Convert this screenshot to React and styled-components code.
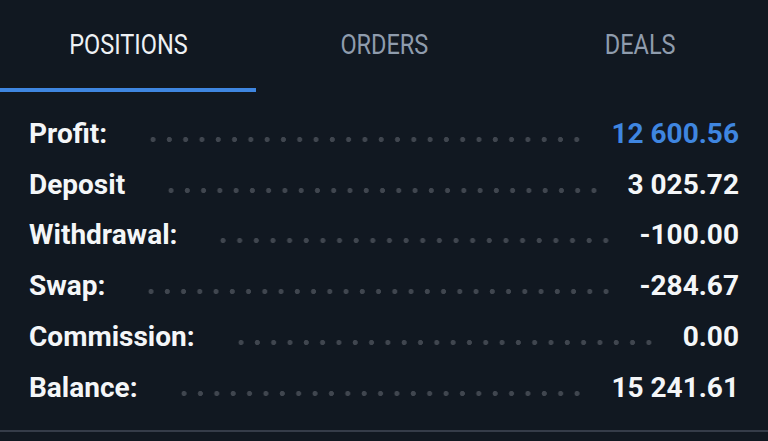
import React from 'react'
import styled, { createGlobalStyle } from 'styled-components'

const BG = '#111821'
const BLUE = '#3f86e0'

const Global = createGlobalStyle`
  html, body {
    margin: 0;
    padding: 0;
    background: ${BG};
  }
  body {
    font-family: Roboto, "Noto Sans", sans-serif;
  }
`

const Screen = styled.div`
  width: 768px;
  height: 441px;
  background: ${BG};
  display: flex;
  flex-direction: column;
  overflow: hidden;
`

const Tabs = styled.div`
  display: grid;
  grid-template-columns: repeat(3, 1fr);
  height: 92px;
  flex-shrink: 0;
`

const Tab = styled.div`
  display: flex;
  justify-content: center;
  padding-top: 29px;
  box-sizing: border-box;
  border-bottom: 4px solid ${props => (props.active ? BLUE : 'transparent')};
`

const TabLabel = styled.span`
  display: inline-block;
  font-size: 28px;
  line-height: 32px;
  font-weight: 400;
  color: ${props => (props.active ? '#eef1f4' : '#8f9cad')};
  transform: scaleX(0.84);
`

const List = styled.div`
  flex: 1;
  padding: 16px 29px 0 29px;
  display: flex;
  flex-direction: column;
`

const Row = styled.div`
  display: flex;
  align-items: center;
  height: 50.8px;
`

const Label = styled.span`
  font-size: 28px;
  font-weight: 700;
  color: #f4f6f8;
  white-space: nowrap;
`

const Leader = styled.span`
  flex: 1;
  align-self: stretch;
  margin: 0 26px 0 38px;
  background-image: radial-gradient(circle, #40464f 2.2px, transparent 2.9px);
  background-size: 16px 7px;
  background-position: 0 calc(50% + 6px);
  background-repeat: space no-repeat;
`

const Value = styled.span`
  font-size: 28px;
  font-weight: 700;
  color: ${props => props.color || '#f4f6f8'};
  white-space: nowrap;
`

const Footer = styled.div`
  height: 2px;
  background: #353c49;
  margin-bottom: 9px;
`

const tabs = ['POSITIONS', 'ORDERS', 'DEALS']

const rows = [
  { label: 'Profit:', value: '12 600.56', color: BLUE },
  { label: 'Deposit', value: '3 025.72' },
  { label: 'Withdrawal:', value: '-100.00' },
  { label: 'Swap:', value: '-284.67' },
  { label: 'Commission:', value: '0.00' },
  { label: 'Balance:', value: '15 241.61' },
]

export default function App() {
  return (
    <>
      <Global />
      <Screen>
        <Tabs>
          {tabs.map((t, i) => (
            <Tab key={t} active={i === 0}>
              <TabLabel active={i === 0}>{t}</TabLabel>
            </Tab>
          ))}
        </Tabs>
        <List>
          {rows.map(r => (
            <Row key={r.label}>
              <Label>{r.label}</Label>
              <Leader />
              <Value color={r.color}>{r.value}</Value>
            </Row>
          ))}
        </List>
        <Footer />
      </Screen>
    </>
  )
}
